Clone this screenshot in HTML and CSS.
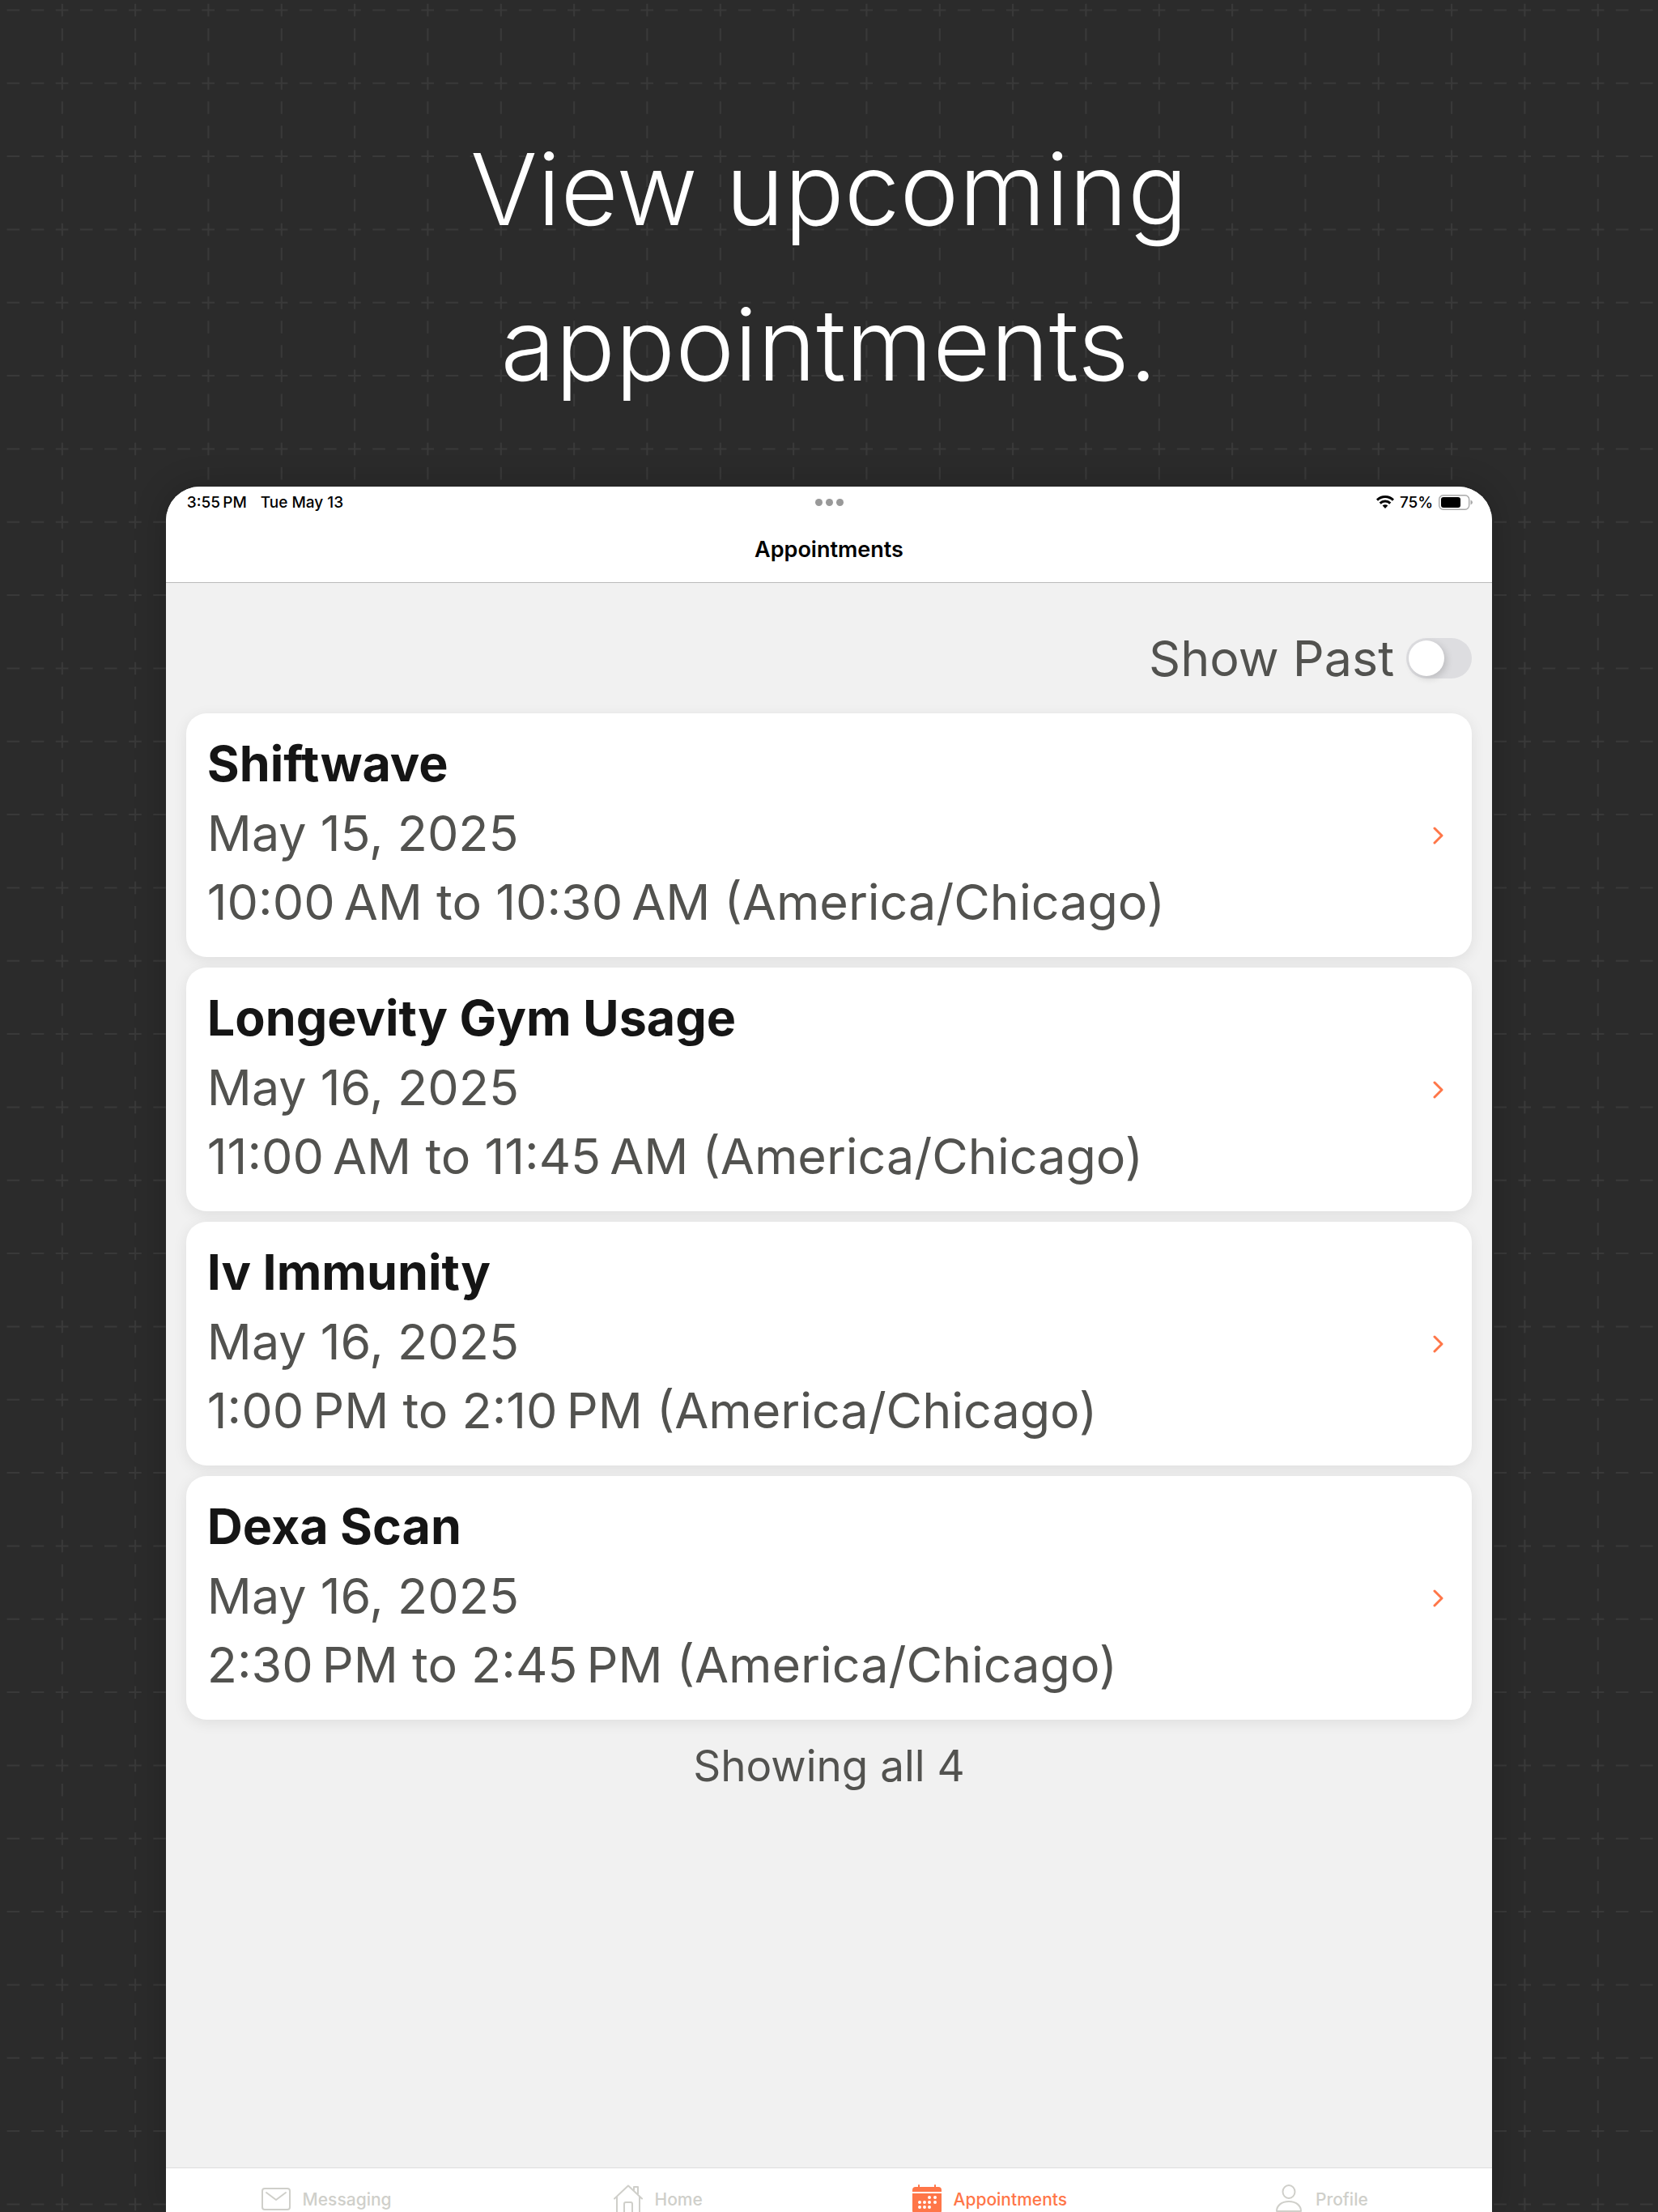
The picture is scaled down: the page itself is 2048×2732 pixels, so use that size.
FILE: index.html
```
<!DOCTYPE html>
<html lang="en">
<head>
    <meta charset="UTF-8">
    <meta name="viewport" content="width=device-width, initial-scale=1.0">
    <title>Appointments</title>
    <link rel="stylesheet" href="styles.css">
</head>
<body>
    <h1 class="headline">View upcoming<br>appointments.</h1>

    <div class="tablet">
        <header class="top">
            <div class="status-bar">
                <div class="status-left">
                    <span>3:55&#8239;PM</span>
                    <span>Tue May 13</span>
                </div>
                <div class="dots"><i></i><i></i><i></i></div>
                <div class="status-right">
                    <svg class="wifi" viewBox="0 0 22 16" fill="none" stroke="#000" stroke-width="3">
                        <path d="M1 5.6a14.5 14.5 0 0 1 20 0"/>
                        <path d="M4.7 9.6a9 9 0 0 1 12.6 0"/>
                        <path d="M11 16l-3.3-3.4a4.7 4.7 0 0 1 6.6 0z" fill="#000" stroke="none"/>
                    </svg>
                    <span>75%</span>
                    <svg class="battery" viewBox="0 0 42 19">
                        <rect x="0.7" y="0.7" width="37" height="17.6" rx="5" fill="none" stroke="#a8a8a8" stroke-width="1.4"/>
                        <rect x="3" y="3" width="24" height="13" rx="3"/>
                        <path d="M39.5 6.5q2.5 1 2.5 3t-2.5 3z" fill="#a8a8a8"/>
                    </svg>
                </div>
            </div>
            <h2 class="title">Appointments</h2>
        </header>

        <main class="content">
            <div class="filter">
                <label for="showPast">Show Past</label>
                <input type="checkbox" class="switch" id="showPast">
            </div>

            <ul class="appointments">
                <li>
                    <a class="card" href="#">
                        <div class="details">
                            <h3>Shiftwave</h3>
                            <p>May 15, 2025</p>
                            <p>10:00&#8239;AM to 10:30&#8239;AM (America/Chicago)</p>
                        </div>
                        <svg class="chevron" viewBox="0 0 14 22"><path d="M2 2l9 9-9 9"/></svg>
                    </a>
                </li>
                <li>
                    <a class="card" href="#">
                        <div class="details">
                            <h3>Longevity Gym Usage</h3>
                            <p>May 16, 2025</p>
                            <p>11:00&#8239;AM to 11:45&#8239;AM (America/Chicago)</p>
                        </div>
                        <svg class="chevron" viewBox="0 0 14 22"><path d="M2 2l9 9-9 9"/></svg>
                    </a>
                </li>
                <li>
                    <a class="card" href="#">
                        <div class="details">
                            <h3>Iv Immunity</h3>
                            <p>May 16, 2025</p>
                            <p>1:00&#8239;PM to 2:10&#8239;PM (America/Chicago)</p>
                        </div>
                        <svg class="chevron" viewBox="0 0 14 22"><path d="M2 2l9 9-9 9"/></svg>
                    </a>
                </li>
                <li>
                    <a class="card" href="#">
                        <div class="details">
                            <h3>Dexa Scan</h3>
                            <p>May 16, 2025</p>
                            <p>2:30&#8239;PM to 2:45&#8239;PM (America/Chicago)</p>
                        </div>
                        <svg class="chevron" viewBox="0 0 14 22"><path d="M2 2l9 9-9 9"/></svg>
                    </a>
                </li>
            </ul>

            <p class="count">Showing all 4</p>
        </main>

        <nav class="tabs">
            <a href="#">
                <svg viewBox="0 0 36 36">
                    <rect x="1" y="5" width="34" height="26" rx="3"/>
                    <path d="M6 10l12 9 12-9"/>
                </svg>
                Messaging
            </a>
            <a href="#">
                <svg viewBox="0 0 36 36">
                    <path d="M1 17.500L18 1.500l17 16M4 15v20h9V24q0-2 2-2h6q2 0 2 2v11h9V15M25 8V3h5v9"/>
                </svg>
                Home
            </a>
            <a href="#" class="active">
                <svg viewBox="0 0 36 36">
                    <path class="solid" d="M0 9V7q0-4 4-4h3V1q0-1 1-1t1 1v2h18V1q0-1 1-1t1 1v2h3q4 0 4 4v2z"/>
                    <path class="solid" d="M0 11h36v21q0 4-4 4H4q-4 0-4-4z"/>
                    <path class="holes" d="M21 16h0M28 16h0M9 22h0M15 22h0M21 22h0M28 22h0M9 28h0M15 28h0M21 28h0"/>
                </svg>
                Appointments
            </a>
            <a href="#">
                <svg viewBox="0 0 36 36">
                    <ellipse cx="18" cy="9" rx="7.500" ry="8"/>
                    <path d="M3 33c0-7 6-12 15-12s15 5 15 12z"/>
                </svg>
                Profile
            </a>
        </nav>
    </div>
</body>
</html>
```

FILE: styles.css
```
* {
    box-sizing: border-box;
    margin: 0;
    padding: 0;
}

body {
    font-family: Inter, "Liberation Sans", sans-serif;
    height: 100vh;
    display: flex;
    flex-direction: column;
    overflow: hidden;
    background: #2b2b2b url("data:image/svg+xml,%3Csvg xmlns='http://www.w3.org/2000/svg' width='271' height='271'%3E%3Cpath d='M-21.500 12.500H271M-21.500 102.800H271M-21.500 193.100H271' stroke='%23393939' stroke-width='2' stroke-dasharray='15.500 14.610'/%3E%3Cpath d='M76.800-25.300V271M167.100-25.300V271M257.400-25.300V271' stroke='%23393939' stroke-width='2' stroke-dasharray='15.500 14.610'/%3E%3C/svg%3E");
}

.headline {
    padding: 138px 0 79px;
    color: #fff;
    font-size: 123px;
    font-weight: 300;
    line-height: 192px;
    text-align: center;
}

.tablet {
    flex: 1;
    width: 80%;
    margin: 0 auto;
    display: flex;
    flex-direction: column;
    background: #f1f1f1;
    border-radius: 42px 42px 0 0;
    box-shadow: 0 0 40px rgba(0, 0, 0, 0.2);
    overflow: hidden;
}

.top {
    background: #fff;
    border-bottom: 1px solid #bbb;
}

.status-bar {
    display: grid;
    grid-template-columns: 1fr auto 1fr;
    align-items: center;
    height: 38px;
    padding: 0 24px 0 26px;
    font-size: 19px;
    font-weight: 500;
}

.status-left,
.status-right {
    display: flex;
    align-items: center;
}

.status-left {
    gap: 17px;
}

.status-right {
    justify-content: flex-end;
    gap: 7px;
}

.dots {
    display: flex;
    gap: 4px;
}

.dots i {
    width: 9px;
    height: 9px;
    border-radius: 50%;
    background: #999;
}

.wifi {
    width: 22px;
    height: 16px;
}

.battery {
    width: 42px;
    height: 19px;
}

.title {
    font-size: 27px;
    font-weight: 600;
    line-height: 80px;
    text-align: center;
}

.content {
    flex: 1;
    padding: 56px 25px 0;
    color: #52524f;
    font-size: 61px;
}

.filter {
    display: flex;
    justify-content: flex-end;
    align-items: center;
    gap: 15px;
    line-height: 74px;
    margin-bottom: 31px;
}

.switch {
    appearance: none;
    width: 81px;
    height: 50px;
    padding: 3px;
    border-radius: 25px;
    background: #dddde0;
    cursor: pointer;
}

.switch::before {
    content: "";
    display: block;
    width: 44px;
    height: 44px;
    border-radius: 50%;
    background: #fff;
    box-shadow: 3px 3px 8px rgba(0, 0, 0, 0.15);
}

.switch:checked {
    background: #ff7648;
}

.switch:checked::before {
    margin-left: auto;
}

.appointments {
    display: flex;
    flex-direction: column;
    gap: 13px;
    list-style: none;
}

.card {
    display: flex;
    justify-content: space-between;
    align-items: center;
    padding: 0 34px 0 26px;
    border-radius: 25px;
    background: #fff;
    box-shadow: 0 4px 18px rgba(0, 0, 0, 0.08);
    color: inherit;
    text-decoration: none;
}

.details {
    padding: 19px 0 25px;
    line-height: 85px;
}

.details h3 {
    color: #151515;
    font-size: 61px;
    font-weight: 700;
    line-height: 87px;
}

.chevron {
    width: 14px;
    height: 22px;
    fill: none;
    stroke: #ff7648;
    stroke-width: 3;
    stroke-linecap: round;
    stroke-linejoin: round;
}

.count {
    padding-top: 20px;
    font-size: 53px;
    line-height: 74px;
    text-align: center;
}

.tabs {
    display: flex;
    height: 55px;
    background: #fff;
    border-top: 1px solid #ddd;
}

.tabs a {
    flex: 1;
    display: flex;
    justify-content: center;
    align-items: center;
    gap: 15px;
    height: 76px;
    padding-right: 13px;
    color: #cfcfca;
    font-size: 21px;
    font-weight: 500;
    text-decoration: none;
}

.tabs svg {
    width: 36px;
    height: 36px;
    fill: none;
    stroke: currentColor;
    stroke-width: 2;
    stroke-linejoin: round;
    stroke-linecap: round;
}

.tabs .active {
    color: #ff7648;
}

.tabs .solid {
    fill: currentColor;
    stroke: none;
}

.tabs .holes {
    stroke: #fff;
    stroke-width: 4;
}
```
